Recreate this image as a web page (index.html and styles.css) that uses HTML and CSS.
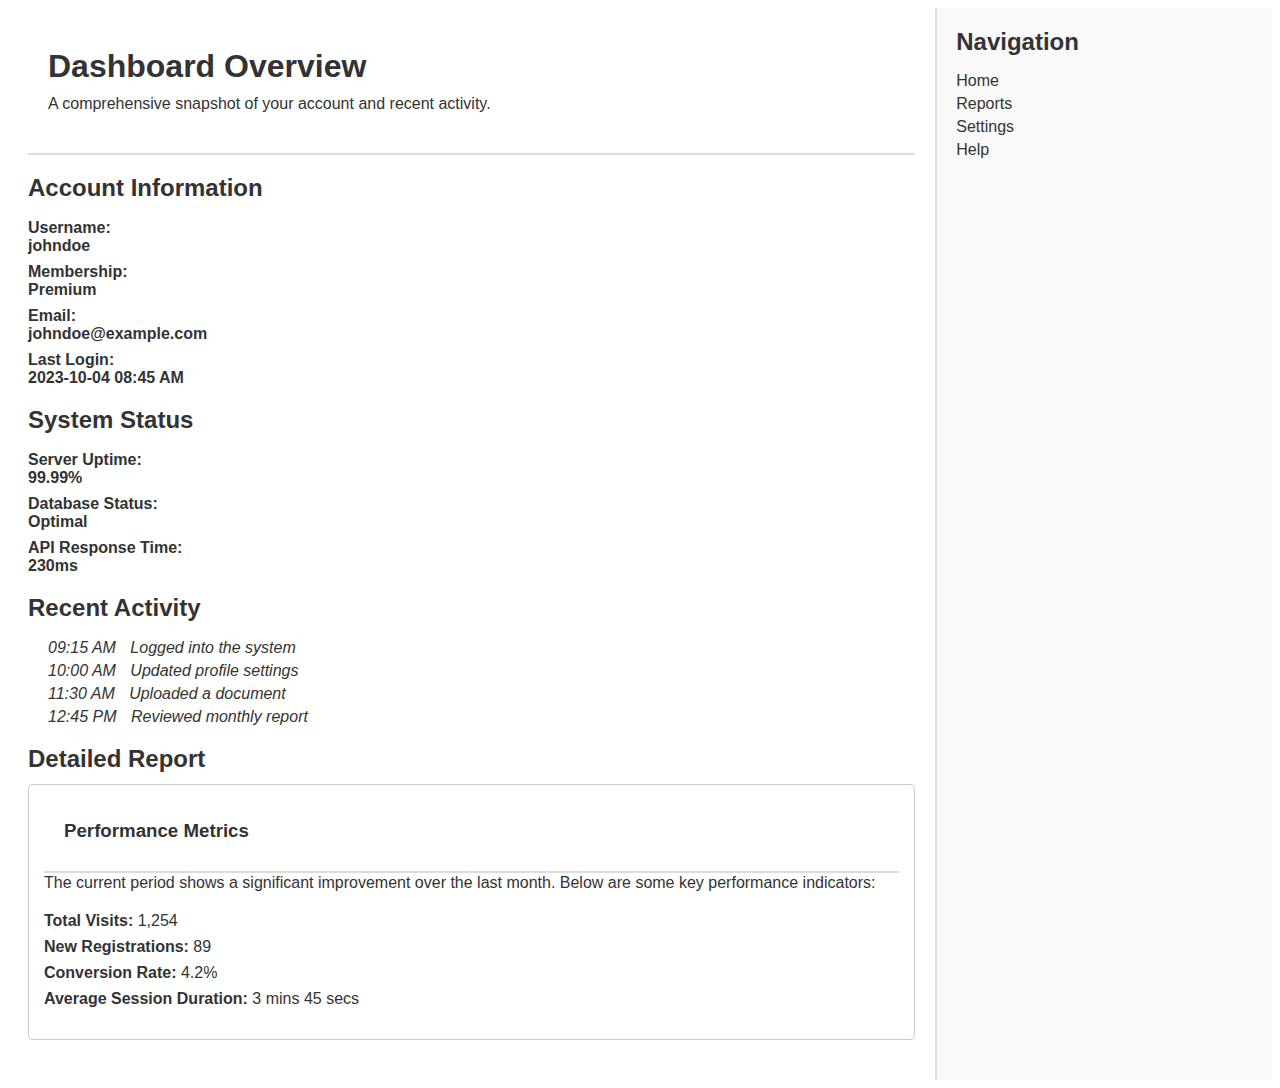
FILE: index.html
```html
<!DOCTYPE html>
<html lang="en">
<head>
<meta charset="utf-8">
<title>Dashboard Overview</title>
<link rel="stylesheet" href="styles.css">
</head>
<body>
<div class="layout">
  <main class="main">
    <header class="page-header">
      <h1 class="page-title">Dashboard Overview</h1>
      <p class="page-sub">A comprehensive snapshot of your account and recent activity.</p>
    </header>

    <section class="section">
      <h2 class="section-title">Account Information</h2>
      <div class="fields">
        <div class="field"><div>Username:</div><div>johndoe</div></div>
        <div class="field"><div>Membership:</div><div>Premium</div></div>
        <div class="field"><div>Email:</div><div>johndoe@example.com</div></div>
        <div class="field"><div>Last Login:</div><div>2023-10-04 08:45 AM</div></div>
      </div>
    </section>

    <section class="section">
      <h2 class="section-title">System Status</h2>
      <div class="fields">
        <div class="field"><div>Server Uptime:</div><div>99.99%</div></div>
        <div class="field"><div>Database Status:</div><div>Optimal</div></div>
        <div class="field"><div>API Response Time:</div><div>230ms</div></div>
      </div>
    </section>

    <section class="section">
      <h2 class="section-title">Recent Activity</h2>
      <ul class="activity">
        <li><span class="time">09:15 AM</span> Logged into the system</li>
        <li><span class="time">10:00 AM</span> Updated profile settings</li>
        <li><span class="time">11:30 AM</span> Uploaded a document</li>
        <li><span class="time">12:45 PM</span> Reviewed monthly report</li>
      </ul>
    </section>

    <section class="section">
      <h2 class="section-title report-title">Detailed Report</h2>
      <div class="card">
        <header class="card-header">
          <h3 class="card-title">Performance Metrics</h3>
        </header>
        <p class="card-text">The current period shows a significant improvement over the last month. Below are some key performance indicators:</p>
        <ul class="metrics">
          <li><strong>Total Visits:</strong> 1,254</li>
          <li><strong>New Registrations:</strong> 89</li>
          <li><strong>Conversion Rate:</strong> 4.2%</li>
          <li><strong>Average Session Duration:</strong> 3 mins 45 secs</li>
        </ul>
      </div>
    </section>
  </main>

  <aside class="sidebar">
    <h2 class="nav-title">Navigation</h2>
    <nav class="nav">
      <a href="#">Home</a>
      <a href="#">Reports</a>
      <a href="#">Settings</a>
      <a href="#">Help</a>
    </nav>
  </aside>
</div>
</body>
</html>
```

FILE: styles.css
```css
html, body {
  margin: 0;
  padding: 0;
}
body {
  margin: 8px;
  font-family: "Liberation Sans", Arial, sans-serif;
  font-size: 16px;
  color: #333;
  background: #fff;
}
.layout {
  display: flex;
  height: 1072px;
}
.main {
  flex: 3;
  padding: 20px;
}
.sidebar {
  flex: 1;
  padding: 20px 20px 20px 19px;
  background: #f9f9f9;
  border-left: 2px solid #ddd;
}
.page-header {
  padding: 20px 20px 20px;
  border-bottom: 2px solid #ddd;
  margin-bottom: 19px;
}
.page-title {
  margin: 0 0 10px;
  font-size: 32px;
  line-height: 37px;
  font-weight: bold;
}
.page-sub {
  margin: 0 0 20px;
  line-height: 18px;
}
.section {
  margin-bottom: 19px;
}
.section-title {
  margin: 0 0 17px;
  font-size: 24px;
  line-height: 28px;
  font-weight: bold;
}
.report-title {
  margin-bottom: 11px;
}
.fields {
  display: flex;
  flex-direction: column;
  gap: 8px;
}
.field {
  font-weight: bold;
  line-height: 18px;
}
.activity {
  list-style: none;
  margin: 0;
  padding: 0 0 0 20px;
  display: flex;
  flex-direction: column;
  gap: 5px;
  font-style: italic;
  line-height: 18px;
}
.time {
  margin-right: 10px;
}
.card {
  border: 1px solid #ccc;
  border-radius: 4px;
  padding: 15px;
}
.card-header {
  padding: 20px 20px 19px;
  border-bottom: 2px solid #ddd;
}
.card-title {
  margin: 0 0 10px;
  font-size: 18.7px;
  line-height: 22px;
  font-weight: bold;
}
.card-text {
  margin: 0 0 20px;
  padding-top: 1px;
  line-height: 18px;
}
.metrics {
  list-style: none;
  margin: 0 0 16px;
  padding: 0;
  display: flex;
  flex-direction: column;
  gap: 8px;
  line-height: 18px;
}
.nav-title {
  margin: 0 0 16px;
  font-size: 24px;
  line-height: 28px;
  font-weight: bold;
}
.nav {
  display: flex;
  flex-direction: column;
  gap: 5px;
}
.nav a {
  color: #333;
  text-decoration: none;
  line-height: 18px;
}
```
